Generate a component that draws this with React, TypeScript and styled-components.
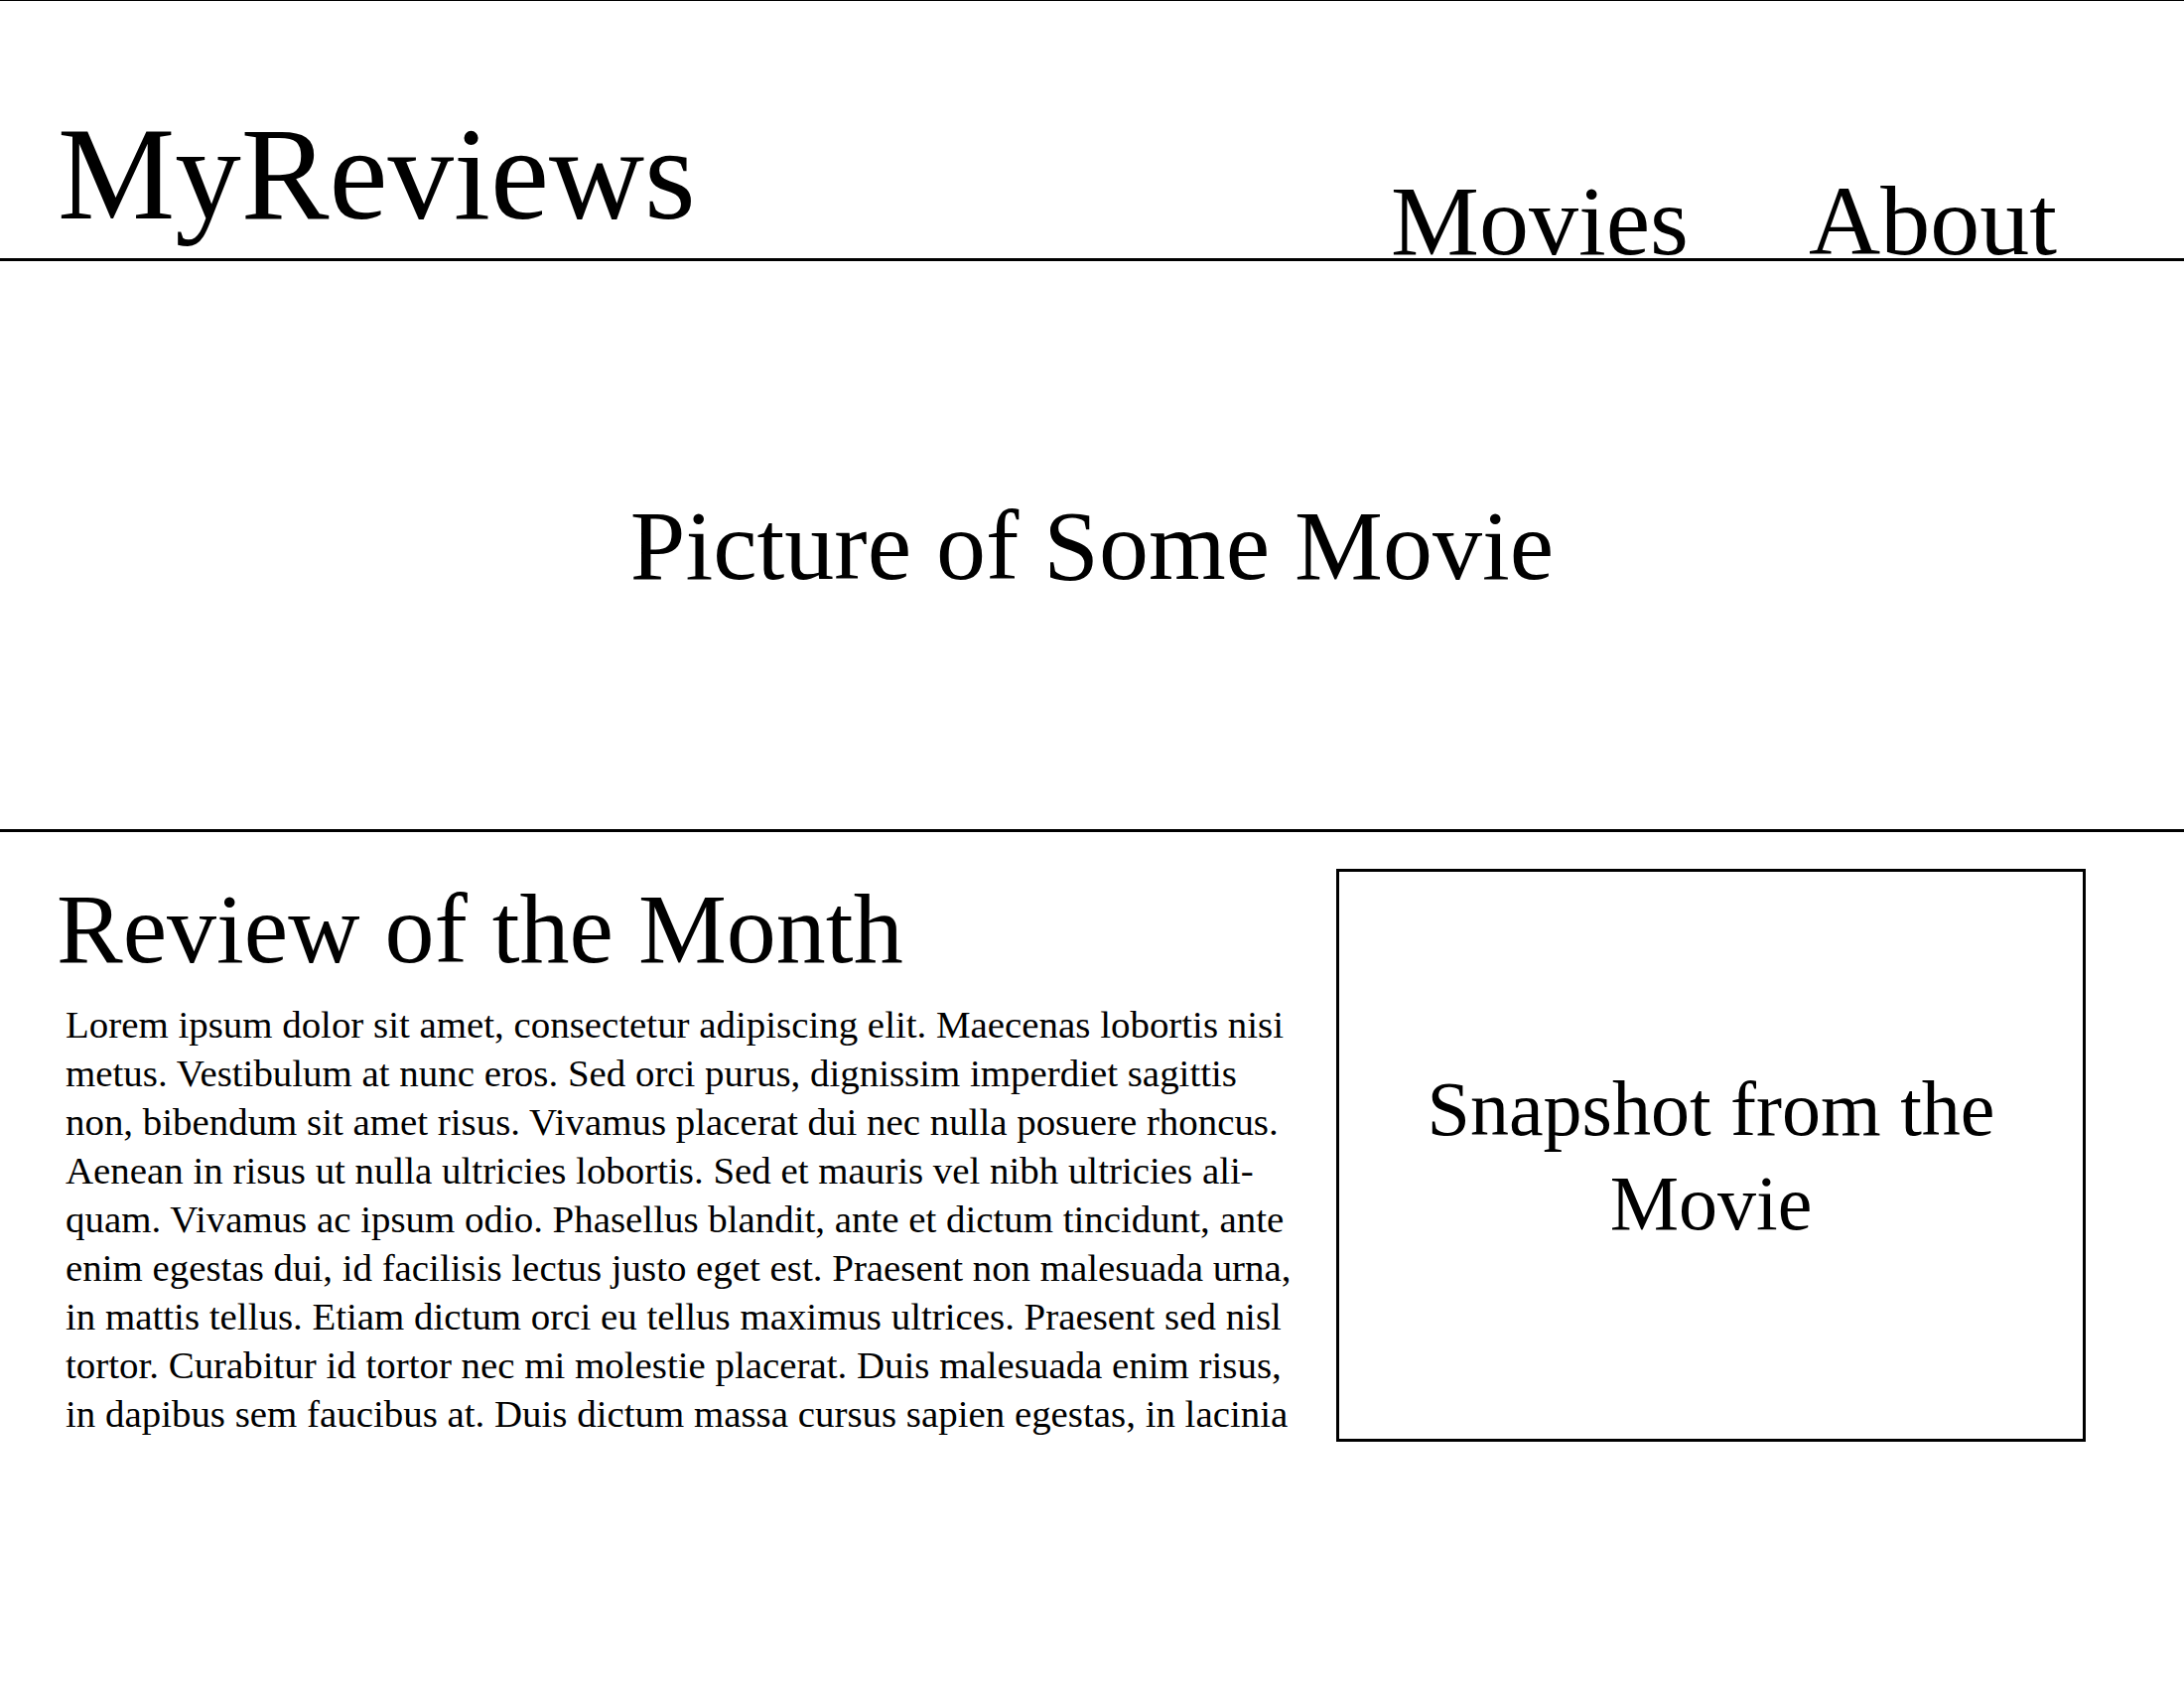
import React from "react";
import styled, { createGlobalStyle } from "styled-components";

const GlobalStyle = createGlobalStyle`
  html, body {
    margin: 0;
    padding: 0;
    background: #ffffff;
  }
  body {
    font-family: "Liberation Serif", "Times New Roman", Times, serif;
    color: #000000;
  }
`;

const Header = styled.header`
  display: flex;
  justify-content: space-between;
  align-items: flex-end;
  height: 259px;
  border-top: 1px solid #000;
  border-bottom: 3px solid #000;
`;

const Logo = styled.h1`
  margin: 0 0 18px 58px;
  font-size: 133px;
  font-weight: normal;
  line-height: 1;
`;

const Nav = styled.nav`
  display: flex;
  gap: 121px;
  padding-right: 128px;
  margin-bottom: 2px;
`;

const NavLink = styled.a`
  font-size: 100px;
  line-height: 0.7;
  color: #000;
  text-decoration: none;
`;

const Hero = styled.section`
  height: 572px;
  display: flex;
  align-items: center;
  justify-content: center;
  border-bottom: 3px solid #000;
`;

const HeroTitle = styled.h2`
  margin: 0;
  padding-top: 2px;
  font-size: 100px;
  font-weight: normal;
  line-height: 1;
`;

const Main = styled.main`
  display: flex;
  justify-content: space-between;
  align-items: flex-start;
  padding: 0 99px 0 57px;
`;

const ReviewColumn = styled.article`
  padding-top: 48px;
`;

const ReviewTitle = styled.h2`
  margin: 0;
  font-size: 100px;
  font-weight: normal;
  line-height: 1;
`;

const ReviewText = styled.p`
  margin: 21px 0 0 9px;
  font-size: 38.9px;
  line-height: 49px;
  width: 32.1em;
`;

const Snapshot = styled.figure`
  margin: 37px 0 0;
  width: 749px;
  height: 571px;
  border: 3px solid #000;
  display: flex;
  align-items: center;
  justify-content: center;
  text-align: center;
  font-size: 78px;
  line-height: 95px;
`;

const lorem =
  "Lorem ipsum dolor sit amet, consectetur adipiscing elit. Maecenas lobortis nisi metus. Vestibulum at nunc eros. Sed orci purus, dignissim imperdiet sagittis non, bibendum sit amet risus. Vivamus placerat dui nec nulla posuere rhoncus. Aenean in risus ut nulla ultricies lobortis. Sed et mauris vel nibh ultricies ali\u00ADquam. Vivamus ac ipsum odio. Phasellus blandit, ante et dictum tincidunt, ante enim egestas dui, id facilisis lectus justo eget est. Praesent non malesuada urna, in mattis tellus. Etiam dictum orci eu tellus maximus ultrices. Praesent sed nisl tortor. Curabitur id tortor nec mi molestie placerat. Duis malesuada enim risus, in dapibus sem faucibus at. Duis dictum massa cursus sapien egestas, in lacinia";

export default function App() {
  return (
    <>
      <GlobalStyle />
      <Header>
        <Logo>MyReviews</Logo>
        <Nav>
          <NavLink href="#">Movies</NavLink>
          <NavLink href="#">About</NavLink>
        </Nav>
      </Header>
      <Hero>
        <HeroTitle>Picture of Some Movie</HeroTitle>
      </Hero>
      <Main>
        <ReviewColumn>
          <ReviewTitle>Review of the Month</ReviewTitle>
          <ReviewText>{lorem}</ReviewText>
        </ReviewColumn>
        <Snapshot>Snapshot from the Movie</Snapshot>
      </Main>
    </>
  );
}
